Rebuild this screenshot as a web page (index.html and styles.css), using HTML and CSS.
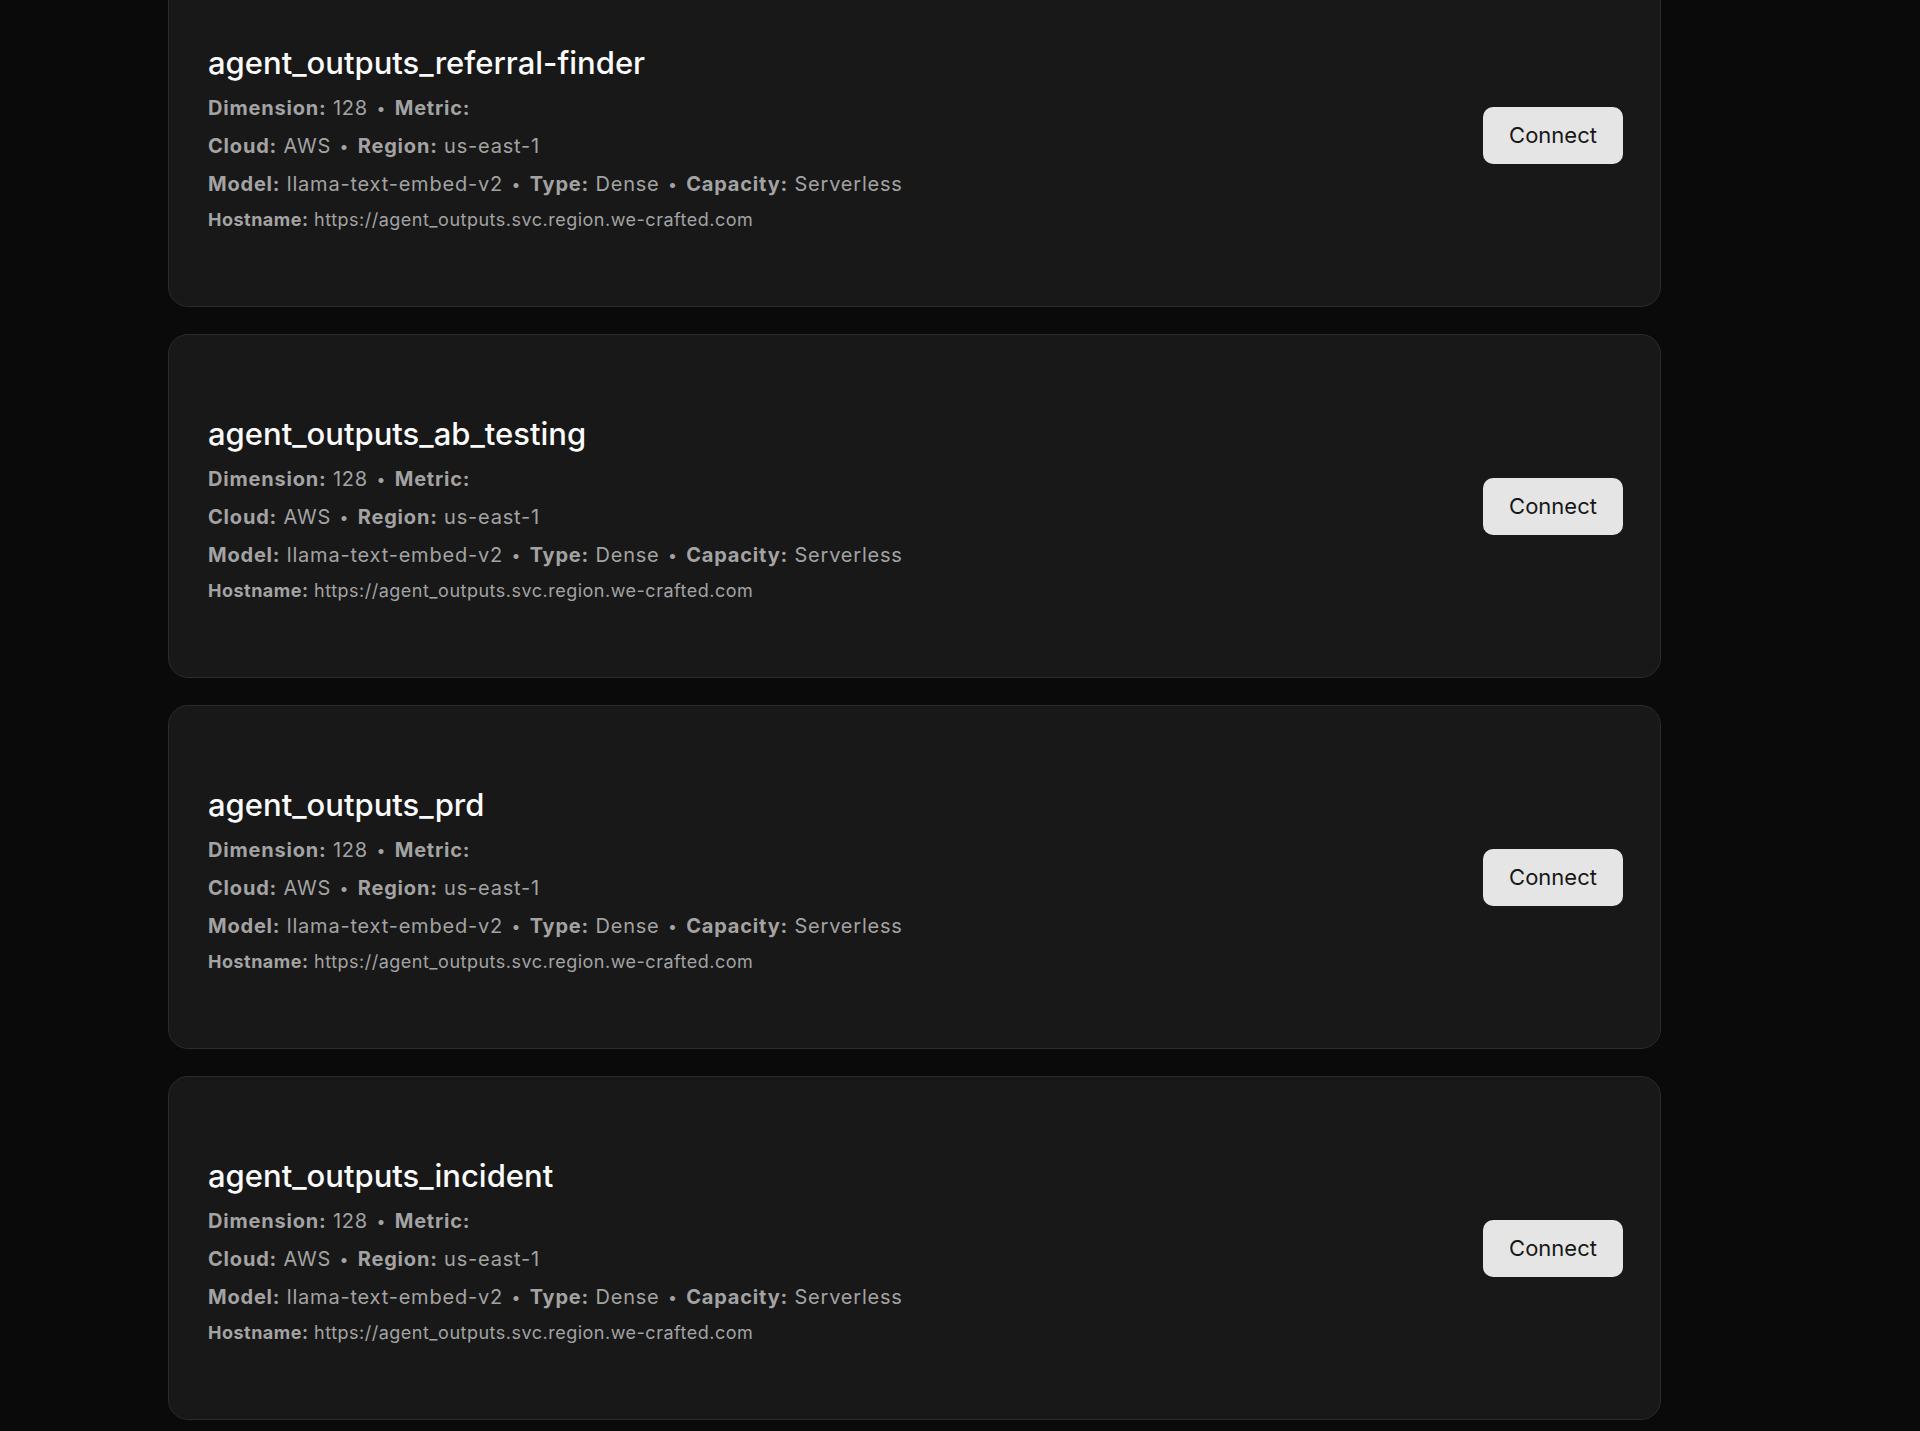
FILE: index.html
```html
<!DOCTYPE html>
<html lang="en">
<head>
<meta charset="utf-8">
<title>Indexes</title>
<link rel="stylesheet" href="styles.css">
</head>
<body>
<main class="list">
  <section class="card">
    <div class="info">
      <h2 class="name">agent_outputs_referral-finder</h2>
      <p class="meta"><b>Dimension:</b> 128 <span class="dot">•</span> <b>Metric:</b></p>
      <p class="meta"><b>Cloud:</b> AWS <span class="dot">•</span> <b>Region:</b> us-east-1</p>
      <p class="meta"><b>Model:</b> llama-text-embed-v2 <span class="dot">•</span> <b>Type:</b> Dense <span class="dot">•</span> <b>Capacity:</b> Serverless</p>
      <p class="host"><b>Hostname:</b> https://agent_outputs.svc.region.we-crafted.com</p>
    </div>
    <button class="connect">Connect</button>
  </section>
  <section class="card">
    <div class="info">
      <h2 class="name">agent_outputs_ab_testing</h2>
      <p class="meta"><b>Dimension:</b> 128 <span class="dot">•</span> <b>Metric:</b></p>
      <p class="meta"><b>Cloud:</b> AWS <span class="dot">•</span> <b>Region:</b> us-east-1</p>
      <p class="meta"><b>Model:</b> llama-text-embed-v2 <span class="dot">•</span> <b>Type:</b> Dense <span class="dot">•</span> <b>Capacity:</b> Serverless</p>
      <p class="host"><b>Hostname:</b> https://agent_outputs.svc.region.we-crafted.com</p>
    </div>
    <button class="connect">Connect</button>
  </section>
  <section class="card">
    <div class="info">
      <h2 class="name">agent_outputs_prd</h2>
      <p class="meta"><b>Dimension:</b> 128 <span class="dot">•</span> <b>Metric:</b></p>
      <p class="meta"><b>Cloud:</b> AWS <span class="dot">•</span> <b>Region:</b> us-east-1</p>
      <p class="meta"><b>Model:</b> llama-text-embed-v2 <span class="dot">•</span> <b>Type:</b> Dense <span class="dot">•</span> <b>Capacity:</b> Serverless</p>
      <p class="host"><b>Hostname:</b> https://agent_outputs.svc.region.we-crafted.com</p>
    </div>
    <button class="connect">Connect</button>
  </section>
  <section class="card">
    <div class="info">
      <h2 class="name">agent_outputs_incident</h2>
      <p class="meta"><b>Dimension:</b> 128 <span class="dot">•</span> <b>Metric:</b></p>
      <p class="meta"><b>Cloud:</b> AWS <span class="dot">•</span> <b>Region:</b> us-east-1</p>
      <p class="meta"><b>Model:</b> llama-text-embed-v2 <span class="dot">•</span> <b>Type:</b> Dense <span class="dot">•</span> <b>Capacity:</b> Serverless</p>
      <p class="host"><b>Hostname:</b> https://agent_outputs.svc.region.we-crafted.com</p>
    </div>
    <button class="connect">Connect</button>
  </section>
</main>
</body>
</html>
```
FILE: styles.css
```css
* { box-sizing: border-box; }
html, body {
  margin: 0;
  padding: 0;
  background: #0a0a0a;
  font-family: Inter, "Noto Sans", sans-serif;
  overflow: hidden;
}
.list {
  display: flex;
  flex-direction: column;
  gap: 27px;
  width: 1493px;
  margin-left: 168px;
  margin-top: -37px;
}
.card {
  display: flex;
  align-items: center;
  justify-content: space-between;
  height: 344px;
  padding: 0 37px 0 39px;
  background: #181818;
  border: 1px solid #2b2b2b;
  border-radius: 20px;
}
.info { display: flex; flex-direction: column; margin-top: 6px; }
.name {
  margin: 0 0 13px;
  font-size: 31px;
  line-height: 36px;
  font-weight: 500;
  color: #fafafa;
}
.meta {
  margin: 0 0 10px;
  font-size: 20px;
  line-height: 28px;
  letter-spacing: 0.8px;
  color: #a3a3a3;
}
.meta b, .host b { font-weight: 700; color: #a3a3a3; }
.dot { font-size: 16px; margin: 0 2px; vertical-align: 1px; }
.host {
  margin: 0;
  font-size: 18px;
  line-height: 24px;
  letter-spacing: 0.5px;
  color: #a3a3a3;
}
.connect {
  width: 140px;
  height: 57px;
  border: none;
  border-radius: 10px;
  background: #e5e5e5;
  color: #171717;
  font-family: inherit;
  font-size: 22px;
  font-weight: 400;
  padding: 0;
}
```
